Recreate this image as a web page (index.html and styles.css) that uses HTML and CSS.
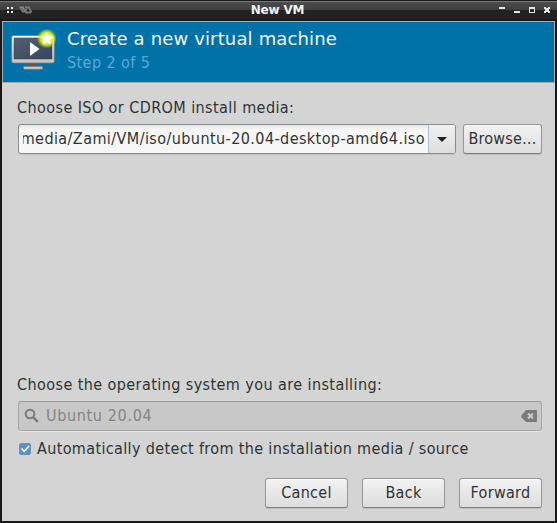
FILE: index.html
```html
<!DOCTYPE html>
<html lang="en">
<head>
<meta charset="utf-8">
<title>New VM</title>
<link rel="stylesheet" href="styles.css">
</head>
<body>
<div class="window">
  <div class="titlebar">
    <svg class="title-left" width="40" height="20" viewBox="0 0 40 20" shape-rendering="crispEdges">
      <path fill="#eee" d="M7 7h2v2H7zM11 7h2v2h-2zM7 11h2v2H7zM11 11h2v2h-2z"/>
      <g shape-rendering="auto" fill="none" stroke-width="1.800"><path stroke="#8d8585" d="M19.500 7.500h3.500l2 4.500"/><path stroke="#777" d="M21 9l2.500 3.500M25 7.500h4l2.500 5M26 9v3.500h5"/></g>
    </svg>
    <span class="title">New VM</span>
    <svg class="title-right" width="60" height="20" viewBox="497 0 60 20" shape-rendering="crispEdges">
      <path fill="#e4e4e4" fill-rule="evenodd" d="M499 7h6v2h-6zM514 11h6v2h-6zM529 7h6v6h-6zM530 9v3h4V9z"/>
      <path fill="#e4e4e4" d="M544 7h2v1h2V7h2v2h-1v2h1v2h-2v-1h-2v1h-2v-2h1V9h-1z"/>
    </svg>
  </div>
  <div class="content">
    <header class="banner">
      <svg class="vm-icon" width="48" height="48" viewBox="8 26 48 48">
        <defs>
          <linearGradient id="frame" x2="0" y2="1"><stop offset="0" stop-color="#fff"/><stop offset="1" stop-color="#c4c4c4"/></linearGradient>
          <linearGradient id="screen" x2="1" y2="1"><stop offset="0" stop-color="#536073"/><stop offset=".5" stop-color="#465367"/><stop offset="1" stop-color="#37455a"/></linearGradient>
          <radialGradient id="glow"><stop offset="0.3" stop-color="#ffff70"/><stop offset=".65" stop-color="#e0ef22" stop-opacity=".9"/><stop offset="1" stop-color="#b4dc20" stop-opacity="0"/></radialGradient>
        </defs>
        <path fill="#555" d="M28 63h10v4H28z"/>
        <rect x="23.500" y="66.300" width="19" height="3" rx="1" fill="#ccc" stroke="#777"/>
        <rect x="11.700" y="35.500" width="42.600" height="27.500" rx="1.500" fill="url(#frame)" stroke="#777" stroke-width=".8"/>
        <rect x="14" y="38" width="38" height="21" fill="url(#screen)" stroke="#333e50" stroke-width=".5"/>
        <path fill="#fff" d="M30 42l9.500 7-9.500 7z"/>
        <circle cx="46.800" cy="38.500" r="10" fill="url(#glow)"/>
        <path fill="#fff" d="M47 32.300l2 4 4 .5-3 3 .8 4.500-3.800-2-4 2 .8-4.500-3-3 4.200-.5z"/>
      </svg>
      <div class="heading">
        <h1><span>Create a new virtual machine</span></h1>
        <p><span>Step 2 of 5</span></p>
      </div>
    </header>
    <main class="page">
      <label class="media-label"><span>Choose ISO or CDROM install media:</span></label>
      <div class="media-row">
        <div class="combo">
          <div class="entry"><span>media/Zami/VM/iso/ubuntu-20.04-desktop-amd64.iso</span></div>
          <div class="arrow"><svg width="10" height="5" viewBox="0 0 10 5"><path fill="#222" d="M0 0h10L5 5z"/></svg></div>
        </div>
        <div class="button browse"><span>Browse…</span></div>
      </div>
      <label class="os-label"><span>Choose the operating system you are installing:</span></label>
      <div class="search">
        <svg width="16" height="16" viewBox="0 0 16 16" fill="none" stroke="#7b7b7b" stroke-width="2"><circle cx="6" cy="6" r="4.300"/><path stroke-width="2.500" d="M9.300 9.300l4.500 4.500"/></svg>
        <span>Ubuntu 20.04</span>
        <svg class="clear" width="16" height="12" viewBox="0 0 16 12"><path fill="#7b7b7b" d="M5 0h10q1 0 1 1v10q0 1-1 1H5L.4 7.200V5.500z"/><path stroke="#ccc" stroke-width="2" d="M7 3.500l5 5M12 3.500l-5 5"/></svg>
      </div>
      <div class="check-row">
        <svg width="12" height="12" viewBox="0 0 12 12"><rect x=".5" y=".5" width="11" height="11" rx="1.500" fill="#5990cb" stroke="#6e92b9"/><path fill="none" stroke="#fff" stroke-width="1.700" d="M2.500 5.500l2.700 2.800L10 3"/></svg>
        <span>Automatically detect from the installation media / source</span>
      </div>
      <footer class="actions">
        <div class="button"><span>Cancel</span></div>
        <div class="button"><span>Back</span></div>
        <div class="button"><span>Forward</span></div>
      </footer>
    </main>
  </div>
</div>
</body>
</html>
```
FILE: styles.css
```css
* { box-sizing: border-box; }
body { margin: 0; background: #191919; color: #2e3436; font: 16px/20px "DejaVu Sans Condensed", "DejaVu Sans", sans-serif; letter-spacing: .42px; }
span { white-space: nowrap; }
.window { width: 557px; height: 523px; display: flex; flex-direction: column; background: #191919; overflow: hidden; }
.titlebar { height: 21px; flex: none; display: flex; justify-content: space-between; border-top: 1px solid #191919; background: linear-gradient(#777 0 1px, #4c4c4c 1px, #3e3e3e 9px, #222 9px, #222 18px, #191919 18px); }
.title-left, .title-right { margin-top: -1px; flex: none; }
.title-left { margin-right: 18px; }
.title { color: #f4f4f4; font: bold 12px/17px "DejaVu Sans", sans-serif; letter-spacing: -.2px; padding-top: 1px; }
.content { width: 553px; height: 500px; margin-left: 2px; background: #d4d4d4; }
.banner { height: 62px; display: flex; border: 1px solid #aaa; background: #0072a8; }
.vm-icon { margin: 4px 0 0 5px; }
.heading { margin-left: 11px; }
h1 { margin: 5px 0 0; font: 18px/24px "DejaVu Sans", sans-serif; letter-spacing: .15px; color: #f2f2f2; }
.heading p { margin: 2px 0 0; color: #56a9dc; line-height: 20px; }
.page { display: flex; flex-direction: column; padding: 15px 13px 0 15px; }
.media-label, .os-label { height: 20px; display: block; }
.media-row { display: flex; gap: 7px; margin: 6px 0 221px; padding-left: 1px; height: 30px; }
.combo { display: flex; width: 438px; border: 1px solid #888d90; border-radius: 3px; box-shadow: 0 1px #c4c4c4; background: linear-gradient(#e5e5e5, #f7f7f7 5px); }
.entry { padding: 4px 3px 0 0; margin-left: 4px; flex: 1; min-width: 0; overflow: hidden; display: flex; justify-content: flex-end; }
.arrow { width: 27px; flex: none; display: flex; align-items: center; justify-content: center; border-left: 1px solid #aac4d8; border-radius: 0 2px 2px 0; background: linear-gradient(#f1f1f1, #ddd); }
.button { width: 83px; height: 30px; display: flex; align-items: center; justify-content: center; border: 1px solid #999; border-bottom-color: #808080; border-radius: 3px; background: linear-gradient(#f2f2f2, #ddd); box-shadow: 0 1px 1px #bbb, inset 0 1px #fafafa; line-height: 20px; }
.browse { width: 79px; letter-spacing: .2px; }
.search { display: flex; align-items: center; height: 30px; margin: 6px 0 0 1px; padding: 0 4px 0 5px; border: 1px solid #a5a5a5; border-top-color: #999; border-radius: 3px; background: #c8c8c8; color: #858585; box-shadow: 0 1px #e5e5e5; }
.search span { margin-left: 6px; letter-spacing: .65px; }
.clear { margin-left: auto; }
.check-row { display: flex; align-items: center; height: 20px; margin: 8px 0 0 2px; gap: 6px; letter-spacing: .36px; }
.actions { display: flex; justify-content: flex-end; gap: 14px; margin-top: 19px; letter-spacing: .3px; }
```
